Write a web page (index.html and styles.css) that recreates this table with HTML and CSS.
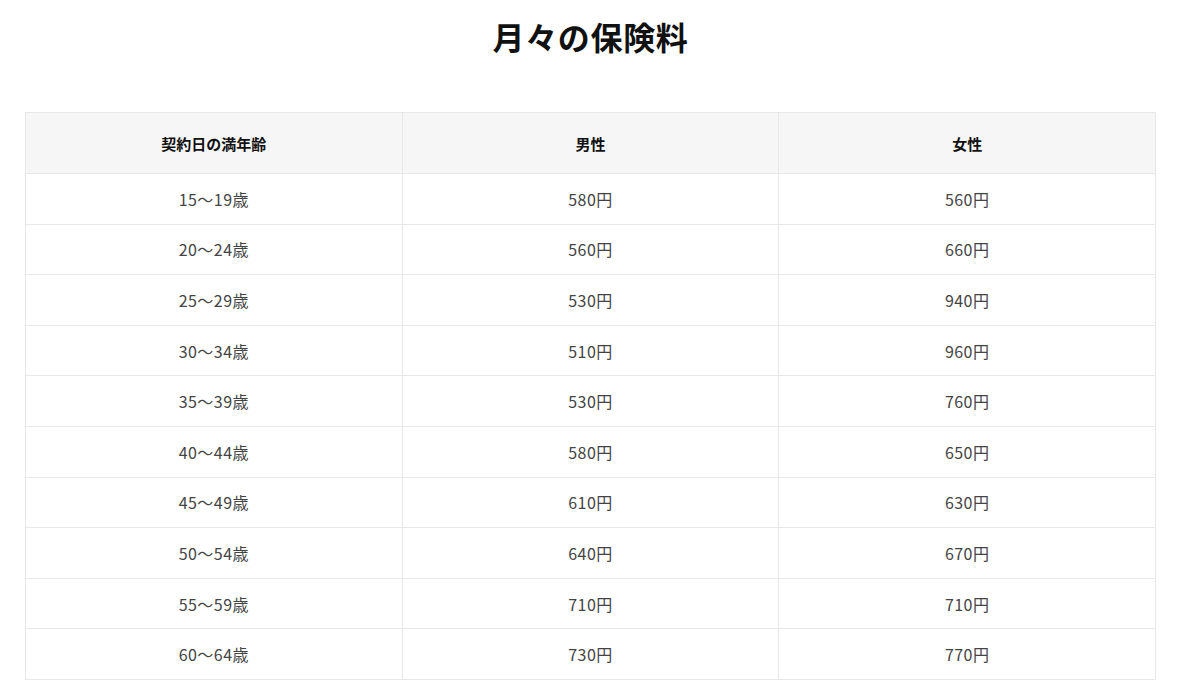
FILE: index.html
```html
<!DOCTYPE html>
<html lang="ja">
<head>
<meta charset="utf-8">
<title>月々の保険料</title>
<link rel="stylesheet" href="styles.css">
</head>
<body>
<main class="page">
  <h1 class="title">月々の保険料</h1>
  <table class="fee-table">
    <thead>
      <tr><th>契約日の満年齢</th><th>男性</th><th>女性</th></tr>
    </thead>
    <tbody>
      <tr><td>15〜19歳</td><td>580円</td><td>560円</td></tr>
      <tr><td>20〜24歳</td><td>560円</td><td>660円</td></tr>
      <tr><td>25〜29歳</td><td>530円</td><td>940円</td></tr>
      <tr><td>30〜34歳</td><td>510円</td><td>960円</td></tr>
      <tr><td>35〜39歳</td><td>530円</td><td>760円</td></tr>
      <tr><td>40〜44歳</td><td>580円</td><td>650円</td></tr>
      <tr><td>45〜49歳</td><td>610円</td><td>630円</td></tr>
      <tr><td>50〜54歳</td><td>640円</td><td>670円</td></tr>
      <tr><td>55〜59歳</td><td>710円</td><td>710円</td></tr>
      <tr><td>60〜64歳</td><td>730円</td><td>770円</td></tr>
    </tbody>
  </table>
</main>
</body>
</html>
```
FILE: styles.css
```css
html, body {
  margin: 0;
  padding: 0;
  background: #ffffff;
}
body {
  font-family: "Noto Sans CJK JP", "Noto Sans", sans-serif;
  color: #444444;
}
.page {
  width: 1131px;
  padding-left: 25px;
}
.title {
  margin: 0;
  padding-top: 12px;
  height: 112px;
  box-sizing: border-box;
  font-size: 32px;
  line-height: 48px;
  font-weight: 700;
  color: #111111;
  text-align: center;
  letter-spacing: 0.02em;
}
.fee-table {
  width: 1131px;
  border-collapse: collapse;
  table-layout: fixed;
  font-size: 16px;
}
.fee-table th,
.fee-table td {
  border: 1px solid #e8e8e8;
  text-align: center;
  vertical-align: middle;
  padding: 0;
}
.fee-table th {
  height: 60px;
  background: #f6f6f6;
  color: #111111;
  font-size: 15px;
  font-weight: 700;
}
.fee-table td {
  height: 49.6px;
  color: #444444;
  letter-spacing: 0.03em;
}
```
